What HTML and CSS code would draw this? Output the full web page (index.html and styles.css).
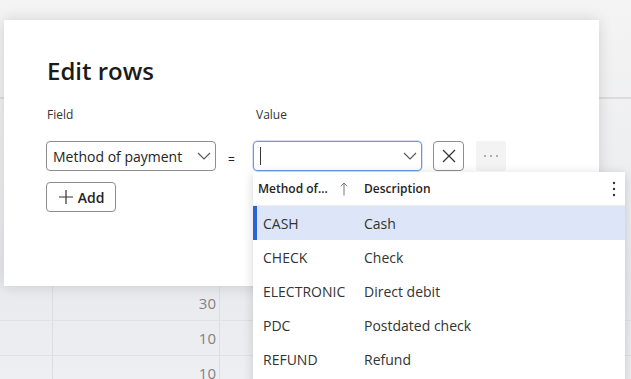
FILE: index.html
```html
<html>
    <head>
        <meta charset="utf-8">
        <title>Edit rows</title>
        <link rel="stylesheet" href="styles.css">
    </head>
    <body>
        <!-- page behind the modal -->
        <div class="page">
            <div class="grid-top"></div>
            <div class="grid-row"><div class="c1"></div><div class="c2">30</div><div class="c3"></div></div>
            <div class="grid-row"><div class="c1"></div><div class="c2">10</div><div class="c3"></div></div>
            <div class="grid-row"><div class="c1"></div><div class="c2">10</div><div class="c3"></div></div>
        </div>

        <div class="dialog">
            <h1 class="title">Edit rows</h1>
            <div class="labels">
                <div class="lbl-field">Field</div>
                <div class="lbl-value">Value</div>
            </div>
            <div class="controls">
                <div class="select field-select">
                    <span>Method of payment</span>
                    <svg class="chev" width="14" height="8" viewBox="0 0 14 8"><path d="M1 1 L7 7 L13 1" fill="none" stroke="#555" stroke-width="1.1"/></svg>
                </div>
                <div class="eq">=</div>
                <div class="select value-select">
                    <span class="caret"></span>
                    <svg class="chev" width="14" height="8" viewBox="0 0 14 8"><path d="M1 1 L7 7 L13 1" fill="none" stroke="#555" stroke-width="1.1"/></svg>
                </div>
                <div class="btn-clear">
                    <svg width="14" height="14" viewBox="0 0 14 14"><path d="M1 1 L13 13 M13 1 L1 13" fill="none" stroke="#333" stroke-width="1.2"/></svg>
                </div>
                <div class="btn-more">
                    <svg width="16" height="4" viewBox="0 0 16 4"><circle cx="2" cy="2" r="1" fill="#999"/><circle cx="8" cy="2" r="1" fill="#999"/><circle cx="14" cy="2" r="1" fill="#999"/></svg>
                </div>
            </div>
            <div class="btn-add">
                <svg width="16" height="16" viewBox="0 0 16 16"><path d="M8 1 V15 M1 8 H15" fill="none" stroke="#333" stroke-width="1.2"/></svg>
                <span>Add</span>
            </div>
        </div>

        <div class="lookup">
            <div class="lk-head">
                <div class="lk-c1">Method of...
                    <svg class="arrow" width="8" height="14" viewBox="0 0 8 14"><path d="M4 13.5 V1 M0.8 4.2 L4 1 L7.2 4.2" fill="none" stroke="#777" stroke-width="1"/></svg>
                </div>
                <div class="lk-c2">Description</div>
                <div class="lk-menu">
                    <svg width="4" height="16" viewBox="0 0 4 16"><circle cx="2" cy="2" r="1.2" fill="#333"/><circle cx="2" cy="8" r="1.2" fill="#333"/><circle cx="2" cy="14" r="1.2" fill="#333"/></svg>
                </div>
            </div>
            <div class="lk-row selected"><div class="lk-c1">CASH</div><div class="lk-c2">Cash</div></div>
            <div class="lk-row"><div class="lk-c1">CHECK</div><div class="lk-c2">Check</div></div>
            <div class="lk-row"><div class="lk-c1">ELECTRONIC</div><div class="lk-c2">Direct debit</div></div>
            <div class="lk-row"><div class="lk-c1">PDC</div><div class="lk-c2">Postdated check</div></div>
            <div class="lk-row"><div class="lk-c1">REFUND</div><div class="lk-c2">Refund</div></div>
        </div>
    </body>
</html>
```

FILE: styles.css
```css
body {
    margin: 0;
    font-family: "Open Sans", "Noto Sans", sans-serif;
    color: #242424;
    overflow: hidden;
    width: 631px;
    height: 379px;
}

/* page behind the modal */
.page {
    height: 379px;
    background: linear-gradient(#f4f4f4, #e9eaee 75%, #eeeff2);
}
.grid-top {
    height: 286px;
    background: linear-gradient(transparent 97px, #dcdcdc 97px, #dcdcdc 99px, transparent 99px);
}
.grid-row {
    display: flex;
    height: 34px;
    border-bottom: 1px solid #e0e1e4;
}
.grid-row .c1 {
    width: 52px;
    border-right: 1px solid #dcdde0;
}
.grid-row .c2 {
    width: 167px;
    border-right: 1px solid #dcdde0;
    text-align: right;
    padding-right: 3px;
    box-sizing: border-box;
    font-size: 15px;
    line-height: 34px;
    color: #828282;
}

/* modal */
.dialog {
    position: absolute;
    left: 4px;
    top: 20px;
    width: 595px;
    height: 266px;
    background: #fff;
    box-shadow: 0 0 14px rgba(0,0,0,0.14);
    padding: 35px 0 0 42px;
    box-sizing: border-box;
}
.title {
    margin: 0 0 0 1px;
    font-size: 24px;
    line-height: 32px;
    font-weight: 600;
    color: #1b1b1b;
}
.labels {
    display: flex;
    margin-top: 20px;
    font-size: 12px;
    line-height: 16px;
    color: #333;
}
.lbl-field {
    width: 207px;
    padding-left: 1px;
}
.lbl-value {
    padding-left: 2px;
}
.controls {
    display: flex;
    align-items: center;
    margin-top: 18px;
    height: 30px;
}
.select {
    height: 30px;
    box-sizing: border-box;
    border: 1px solid #8d8d8d;
    border-radius: 4px;
    display: flex;
    align-items: center;
    justify-content: space-between;
    padding: 0 4px 0 6px;
    font-size: 14px;
}
.field-select {
    width: 170px;
}
.eq {
    width: 37px;
    padding-left: 12px;
    box-sizing: border-box;
    font-size: 12px;
    padding-top: 6px;
}
.value-select {
    width: 169px;
    border-color: #6b98e6;
    box-shadow: 0 0 0 0.5px #a8c2f0;
}
.caret {
    width: 1px;
    height: 18px;
    background: #333;
}
.btn-clear {
    margin-left: 11px;
    width: 31px;
    height: 30px;
    box-sizing: border-box;
    border: 1px solid #8d8d8d;
    border-radius: 4px;
    display: flex;
    align-items: center;
    justify-content: center;
}
.btn-more {
    margin-left: 12px;
    width: 30px;
    height: 30px;
    background: #f3f3f3;
    border-radius: 3px;
    display: flex;
    align-items: center;
    justify-content: center;
}
.btn-add {
    margin-top: 11px;
    width: 70px;
    height: 30px;
    box-sizing: border-box;
    border: 1px solid #8d8d8d;
    border-radius: 4px;
    display: flex;
    align-items: center;
    justify-content: center;
    gap: 4px;
    font-size: 14px;
    font-weight: 600;
}

/* lookup popup */
.lookup {
    position: absolute;
    left: 253px;
    top: 172px;
    width: 372px;
    height: 220px;
    background: #fff;
    box-shadow: 0 2px 10px rgba(0,0,0,0.16);
}
.lk-head {
    display: flex;
    align-items: center;
    height: 33px;
    font-size: 12px;
    font-weight: 600;
    border-bottom: 1px solid #ededed;
}
.lk-head .lk-c1 {
    width: 106px;
    padding-left: 5px;
    display: flex;
    align-items: center;
}
.arrow {
    margin-left: 12px;
}
.lk-head .lk-c2 {
    flex: 1;
}
.lk-menu {
    width: 22px;
    display: flex;
    justify-content: center;
}
.lk-row {
    display: flex;
    align-items: center;
    height: 34px;
    font-size: 14px;
    color: #333;
}
.lk-row .lk-c1 {
    width: 101px;
    padding-left: 10px;
}
.lk-row.selected {
    background: #dce6f8;
    box-shadow: inset 4px 0 0 #2b62d9;
}
```
